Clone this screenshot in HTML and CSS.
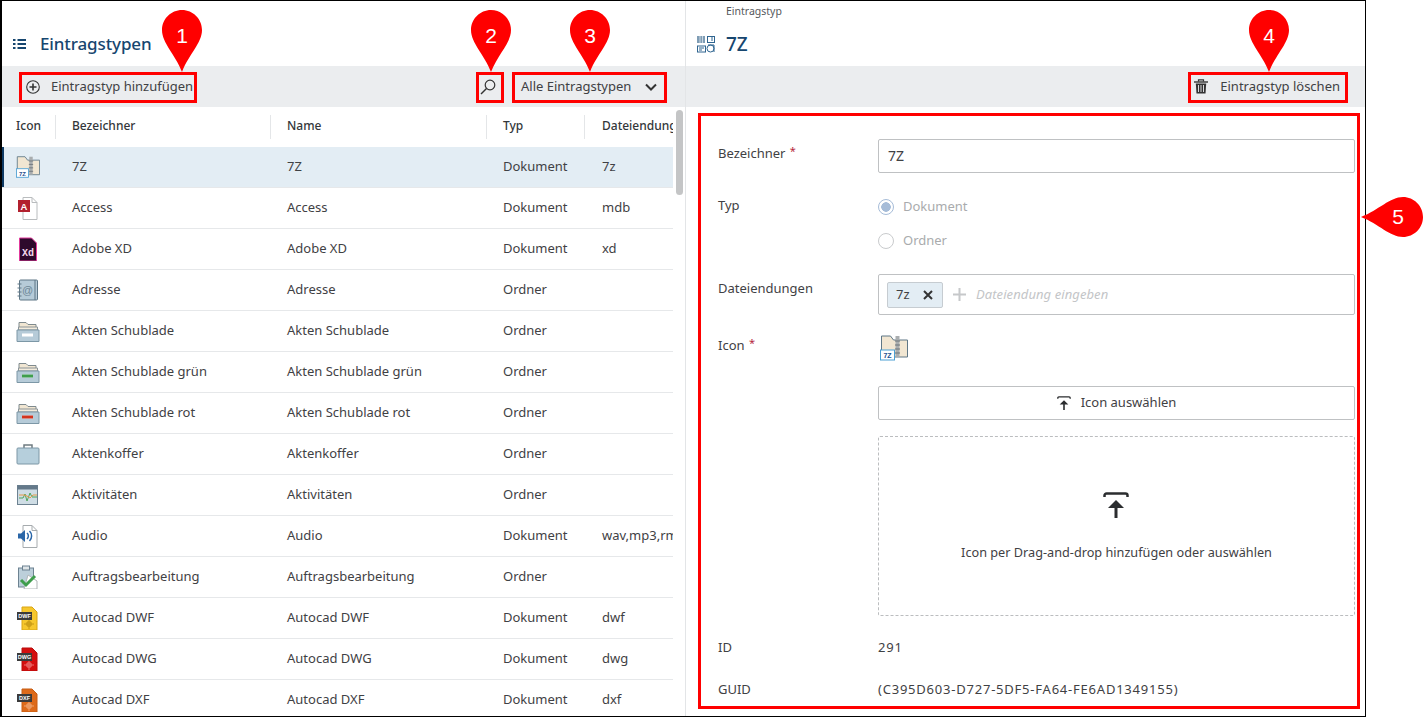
FILE: index.html
```html
<!DOCTYPE html>
<html lang="de">
<head>
<meta charset="utf-8">
<title>Eintragstypen</title>
<link rel="stylesheet" href="styles.css">
</head>
<body>
<svg class="defs" width="0" height="0" aria-hidden="true">
  <defs>
    <symbol id="i-zip" viewBox="0 0 28 26">
      <path d="M1.500 1h9l3 4h14v17h-26z" fill="#f1e6d2" stroke="#5f7786"/>
      <rect x="15.500" y="1" width="4" height="21" fill="#a9adaf"/>
      <path d="M15 6h5M15 10h5M15 14h5M15 18h5" stroke="#6d7478"/>
      <rect x="0.500" y="15" width="14" height="10" fill="#fff" stroke="#4c9fd3"/>
      <text x="7.500" y="23" font-size="7" font-weight="700" fill="#1f4f8f" text-anchor="middle" font-family="Liberation Sans">7Z</text>
    </symbol>
    <symbol id="i-access" viewBox="0 0 24 24">
      <path d="M7 1.500h9l5 5v17h-14z" fill="#fff" stroke="#b9bcbe"/>
      <path d="M16 1.500v5h5" fill="none" stroke="#b9bcbe"/>
      <rect x="2" y="4" width="12" height="12" fill="#b2202e"/>
      <text x="8" y="13.500" font-size="9.500" font-weight="700" fill="#fff" text-anchor="middle" font-family="Liberation Sans">A</text>
    </symbol>
    <symbol id="i-xd" viewBox="0 0 24 24">
      <path d="M3.500 1h12l5 5v18h-17z" fill="#2e0a2c" stroke="#e0399b"/>
      <text x="12" y="19" font-size="10" font-weight="700" fill="#f4d7ec" text-anchor="middle" font-family="Liberation Mono">Xd</text>
    </symbol>
    <symbol id="i-addr" viewBox="0 0 24 24">
      <rect x="3.500" y="2" width="18" height="20" rx="1" fill="#b6cbd8" stroke="#5f7786"/>
      <path d="M19 2v20" stroke="#5f7786"/>
      <path d="M1.500 6h4M1.500 10h4M1.500 14h4M1.500 18h4" stroke="#5f7786"/>
      <text x="11.500" y="16" font-size="11" fill="#6d8797" text-anchor="middle" font-family="Liberation Sans">@</text>
    </symbol>
    <symbol id="i-drawer" viewBox="0 0 24 24">
      <path d="M3 10V3.500h7l2 2h8V10z" fill="#f1e6d2" stroke="#7f8a8e"/>
      <path d="M2.500 8h19v3h-19z" fill="#f4ecdc" stroke="#8b9498"/>
      <path d="M1 11h22v11.500H1z" fill="#b6cbd8" stroke="#7c97a6"/>
      <rect x="6" y="14.500" width="11" height="3" fill="#fff"/>
    </symbol>
    <symbol id="i-drawer-g" viewBox="0 0 24 24">
      <use href="#i-drawer"/>
      <rect x="6" y="14.500" width="11" height="3" fill="#3f9e4d"/>
    </symbol>
    <symbol id="i-drawer-r" viewBox="0 0 24 24">
      <use href="#i-drawer"/>
      <rect x="6" y="14.500" width="11" height="3" fill="#d2351f"/>
    </symbol>
    <symbol id="i-case" viewBox="0 0 24 24">
      <path d="M8 6V3h8v3" fill="none" stroke="#6f7b80" stroke-width="1.500"/>
      <rect x="1" y="6" width="22" height="16" rx="1" fill="#b6cfdc" stroke="#7c97a6"/>
    </symbol>
    <symbol id="i-act" viewBox="0 0 24 24">
      <rect x="1.500" y="2.500" width="20" height="19" fill="#cfdde5" stroke="#6d8291"/>
      <rect x="1.500" y="2.500" width="20" height="4" fill="#64798a"/>
      <path d="M3 15h4l2-4 2 7 3-8 2 4h5" fill="none" stroke="#4fa45b"/>
      <path d="M3 12h5l3 1 3 2 3-3h4" fill="none" stroke="#e39a4a"/>
    </symbol>
    <symbol id="i-audio" viewBox="0 0 24 24">
      <path d="M7 1.500h9l5 5v17h-14z" fill="#fff" stroke="#a6abae"/>
      <path d="M16 1.500v5h5" fill="none" stroke="#a6abae"/>
      <path d="M2 9.500h3l4-3.500v12l-4-3.500h-3z" fill="#2a66a8"/>
      <path d="M11 9a4 4 0 0 1 0 6M13.500 7a7 7 0 0 1 0 10" fill="none" stroke="#2a66a8" stroke-width="1.500"/>
    </symbol>
    <symbol id="i-task" viewBox="0 0 24 24">
      <rect x="2.500" y="3" width="15" height="19" fill="#bccfda" stroke="#6d8291"/>
      <rect x="6.500" y="1" width="7" height="4" fill="#dfe5e8" stroke="#6d8291"/>
      <path d="M12 10l9 6v8H8z" fill="#fff" stroke="#b0b5b7"/>
      <path d="M5 15l5 5 9-9" fill="none" stroke="#3f9e4d" stroke-width="3"/>
    </symbol>
    <symbol id="i-dwf" viewBox="0 0 24 24">
      <path d="M6 1h10l5 5v18H6z" fill="#f6c72d" stroke="#d9a514"/>
      <rect x="1" y="6" width="15" height="8" fill="#3b3b3b"/>
      <text x="8.500" y="12.300" font-size="5.500" font-weight="700" fill="#fff" text-anchor="middle" font-family="Liberation Sans">DWF</text>
      <path d="M13 14v9M8 18h10M11 16h4v4h-4z" fill="none" stroke="#b78a10" stroke-width=".8"/>
    </symbol>
    <symbol id="i-dwg" viewBox="0 0 24 24">
      <path d="M6 1h10l5 5v18H6z" fill="#d40f0f" stroke="#b90d0d"/>
      <rect x="1" y="6" width="15" height="8" fill="#3b3b3b"/>
      <text x="8.500" y="12.300" font-size="5.500" font-weight="700" fill="#fff" text-anchor="middle" font-family="Liberation Sans">DWG</text>
      <path d="M13 14v9M8 18h10M11 16h4v4h-4z" fill="none" stroke="#f08a8a" stroke-width=".8"/>
    </symbol>
    <symbol id="i-dxf" viewBox="0 0 24 24">
      <path d="M6 1h10l5 5v18H6z" fill="#dd6a1a" stroke="#c75c12"/>
      <rect x="1" y="6" width="15" height="8" fill="#3b3b3b"/>
      <text x="8.500" y="12.300" font-size="5.500" font-weight="700" fill="#fff" text-anchor="middle" font-family="Liberation Sans">DXF</text>
      <path d="M13 14v9M8 18h10M11 16h4v4h-4z" fill="none" stroke="#f4b58a" stroke-width=".8"/>
    </symbol>
    <symbol id="i-upload" viewBox="0 0 26 26">
      <path d="M1.500 5V3.500a2 2 0 0 1 2-2h19a2 2 0 0 1 2 2V5" fill="none" stroke="currentColor" stroke-width="2.500"/>
      <path d="M13 26V11" stroke="currentColor" stroke-width="3"/>
      <path d="M5 16l8-8 8 8z" fill="currentColor"/>
    </symbol>
    <symbol id="i-pin" viewBox="0 0 40 62">
      <path d="M20 0C31 0 40 9 40 20C40 33 27 44 20 62C13 44 0 33 0 20C0 9 9 0 20 0Z" fill="#ff0000"/>
    </symbol>
    <symbol id="i-pin-h" viewBox="0 0 62 40">
      <path d="M62 20C62 31 53 40 42 40C29 40 18 27 0 20C18 13 29 0 42 0C53 0 62 9 62 20Z" fill="#ff0000"/>
    </symbol>
  </defs>
</svg>

<div class="app">
  <section class="pane pane-left">
    <header class="head head-left">
      <svg class="ico-list" viewBox="0 0 13 10" width="13" height="10"><path d="M0 1h2.500M0 5h2.500M0 9h2.500M4.500 1H13M4.500 5H13M4.500 9H13" fill="none" stroke="#17466f" stroke-width="2"/></svg>
      <h1 class="title">Eintragstypen</h1>
    </header>
    <div class="toolbar">
      <button class="tool tool-add">
        <svg viewBox="0 0 14 14" width="14" height="14"><circle cx="7" cy="7" r="6.300" fill="none" stroke="#333" stroke-width="1.100"/><path d="M3.500 7h7M7 3.500v7" stroke="#333" stroke-width="1.600"/></svg>
        <span class="lift">Eintragstyp hinzufügen</span>
      </button>
      <button class="tool tool-search" aria-label="Suchen">
        <svg viewBox="0 0 16 16" width="16" height="16"><circle cx="10" cy="6" r="4.800" fill="none" stroke="#333" stroke-width="1.200"/><path d="M6.500 9.500L1 15" stroke="#333" stroke-width="1.400"/></svg>
      </button>
      <button class="tool tool-select">
        <span class="lift">Alle Eintragstypen</span>
        <svg viewBox="0 0 12 8" width="12" height="8"><path d="M1 1.500l5 5 5-5" fill="none" stroke="#333" stroke-width="2"/></svg>
      </button>
    </div>
    <div class="table">
      <div class="tr th">
        <div class="c">Icon</div><div class="c">Bezeichner</div><div class="c">Name</div><div class="c">Typ</div><div class="c last">Dateiendung</div>
      </div>
      <div class="tr sel"><div class="c"><svg class="ri"><use href="#i-zip"/></svg></div><div class="c">7Z</div><div class="c">7Z</div><div class="c">Dokument</div><div class="c last">7z</div></div>
      <div class="tr"><div class="c"><svg class="ri"><use href="#i-access"/></svg></div><div class="c">Access</div><div class="c">Access</div><div class="c">Dokument</div><div class="c last">mdb</div></div>
      <div class="tr"><div class="c"><svg class="ri"><use href="#i-xd"/></svg></div><div class="c">Adobe XD</div><div class="c">Adobe XD</div><div class="c">Dokument</div><div class="c last">xd</div></div>
      <div class="tr"><div class="c"><svg class="ri"><use href="#i-addr"/></svg></div><div class="c">Adresse</div><div class="c">Adresse</div><div class="c">Ordner</div><div class="c last"></div></div>
      <div class="tr"><div class="c"><svg class="ri"><use href="#i-drawer"/></svg></div><div class="c">Akten Schublade</div><div class="c">Akten Schublade</div><div class="c">Ordner</div><div class="c last"></div></div>
      <div class="tr"><div class="c"><svg class="ri"><use href="#i-drawer-g"/></svg></div><div class="c">Akten Schublade grün</div><div class="c">Akten Schublade grün</div><div class="c">Ordner</div><div class="c last"></div></div>
      <div class="tr"><div class="c"><svg class="ri"><use href="#i-drawer-r"/></svg></div><div class="c">Akten Schublade rot</div><div class="c">Akten Schublade rot</div><div class="c">Ordner</div><div class="c last"></div></div>
      <div class="tr"><div class="c"><svg class="ri"><use href="#i-case"/></svg></div><div class="c">Aktenkoffer</div><div class="c">Aktenkoffer</div><div class="c">Ordner</div><div class="c last"></div></div>
      <div class="tr"><div class="c"><svg class="ri"><use href="#i-act"/></svg></div><div class="c">Aktivitäten</div><div class="c">Aktivitäten</div><div class="c">Ordner</div><div class="c last"></div></div>
      <div class="tr"><div class="c"><svg class="ri"><use href="#i-audio"/></svg></div><div class="c">Audio</div><div class="c">Audio</div><div class="c">Dokument</div><div class="c last">wav,mp3,rm</div></div>
      <div class="tr"><div class="c"><svg class="ri"><use href="#i-task"/></svg></div><div class="c">Auftragsbearbeitung</div><div class="c">Auftragsbearbeitung</div><div class="c">Ordner</div><div class="c last"></div></div>
      <div class="tr"><div class="c"><svg class="ri"><use href="#i-dwf"/></svg></div><div class="c">Autocad DWF</div><div class="c">Autocad DWF</div><div class="c">Dokument</div><div class="c last">dwf</div></div>
      <div class="tr"><div class="c"><svg class="ri"><use href="#i-dwg"/></svg></div><div class="c">Autocad DWG</div><div class="c">Autocad DWG</div><div class="c">Dokument</div><div class="c last">dwg</div></div>
      <div class="tr"><div class="c"><svg class="ri"><use href="#i-dxf"/></svg></div><div class="c">Autocad DXF</div><div class="c">Autocad DXF</div><div class="c">Dokument</div><div class="c last">dxf</div></div>
    </div>
    <div class="scrollbar"></div>
  </section>

  <section class="pane pane-right">
    <header class="head head-right">
      <div class="crumb">Eintragstyp</div>
      <div class="head-line">
        <svg class="ico-types" viewBox="0 0 18 17" width="18" height="17">
          <rect x="0" y="0" width="8" height="7" fill="#7f9db5"/>
          <path d="M3 0v7M5.500 0v7" stroke="#fff" stroke-width=".6"/>
          <rect x="10.500" y=".5" width="7" height="6" fill="none" stroke="#2f6590"/>
          <path d="M14 2h2M14 4h2" stroke="#2f6590"/>
          <rect x=".5" y="10" width="8" height="6" fill="none" stroke="#2f6590"/>
          <path d="M2 12h5M2 14h3" stroke="#2f6590"/>
          <circle cx="13.500" cy="12.500" r="3.500" fill="none" stroke="#2f6590"/>
          <path d="M11 9h6v7" fill="none" stroke="#2f6590"/>
        </svg>
        <h2 class="title title-7z">7Z</h2>
      </div>
    </header>
    <div class="toolbar toolbar-right">
      <button class="tool tool-del">
        <svg viewBox="0 0 14 15" width="14" height="15"><path d="M0 3h14" stroke="#333" stroke-width="1.400"/><path d="M4.500 2.500V.8h5v1.700" fill="none" stroke="#333" stroke-width="1.200"/><path d="M1.800 4.500h10.400l-.7 10h-9z" fill="#333"/><path d="M4.500 6v7M7 6v7M9.500 6v7" stroke="#eceef0" stroke-width=".9"/></svg>
        <span class="lift">Eintragstyp löschen</span>
      </button>
    </div>
    <form class="form">
      <label class="lb">Bezeichner <i>*</i></label>
      <div class="input"><span class="lift">7Z</span></div>

      <label class="lb lb-typ">Typ</label>
      <div class="radios">
        <div class="radio"><span class="dot on"></span><span class="lift">Dokument</span></div>
        <div class="radio"><span class="dot"></span><span class="lift">Ordner</span></div>
      </div>

      <label class="lb">Dateiendungen</label>
      <div class="tags">
        <span class="tag"><span class="lift">7z</span>
          <svg viewBox="0 0 10 10" width="10" height="10"><path d="M1 1l8 8M9 1l-8 8" stroke="#333" stroke-width="2"/></svg>
        </span>
        <svg class="plus" viewBox="0 0 13 13" width="13" height="13"><path d="M6.500 0v13M0 6.500h13" stroke="#c6c8ca" stroke-width="2"/></svg>
        <span class="ph lift">Dateiendung eingeben</span>
      </div>

      <label class="lb">Icon <i>*</i></label>
      <div class="iconrow"><svg class="bigicon"><use href="#i-zip"/></svg></div>

      <div class="sp"></div>
      <button type="button" class="btn"><svg class="up-s"><use href="#i-upload"/></svg><span class="lift">Icon auswählen</span></button>

      <div class="sp"></div>
      <div class="drop">
        <svg class="up-l"><use href="#i-upload"/></svg>
        <div>Icon per Drag-and-drop hinzufügen oder auswählen</div>
      </div>

      <label class="lb lb-v">ID</label>
      <div class="val val-id">291</div>
      <label class="lb lb-v2">GUID</label>
      <div class="val">(C395D603-D727-5DF5-FA64-FE6AD1349155)</div>
    </form>
  </section>

  <div class="box box-1"></div>
  <div class="box box-2"></div>
  <div class="box box-3"></div>
  <div class="box box-4"></div>
  <div class="box box-5"></div>
  <div class="pin pin-1"><svg class="pin-v"><use href="#i-pin"/></svg><span>1</span></div>
  <div class="pin pin-2"><svg class="pin-v"><use href="#i-pin"/></svg><span>2</span></div>
  <div class="pin pin-3"><svg class="pin-v"><use href="#i-pin"/></svg><span>3</span></div>
  <div class="pin pin-4"><svg class="pin-v"><use href="#i-pin"/></svg><span>4</span></div>
  <div class="pin pin-5"><svg class="pin-h"><use href="#i-pin-h"/></svg><span>5</span></div>
</div>
</body>
</html>
```
FILE: styles.css
```css
* { box-sizing: border-box; }
html, body { margin: 0; padding: 0; height: 718px; overflow: hidden; background: #fff; }
body { font-family: "Noto Sans", sans-serif; font-size: 13px; color: #3f4144; }
.defs { position: absolute; }
button { font: inherit; color: inherit; background: none; border: 0; padding: 0; display: flex; align-items: center; }
.lift { padding-bottom: 2px; display: block; }

.app {
  position: relative;
  width: 1366px;
  height: 717px;
  border: 1px solid #000;
  border-left-width: 2px;
  display: flex;
  overflow: visible;
}
.pane { display: flex; flex-direction: column; min-width: 0; height: 100%; overflow: hidden; position: relative; }
.pane-left { width: 684px; border-right: 1px solid #e3e5e7; flex: none; }
.pane-right { flex: 1; }

.head { height: 65px; flex: none; }
.head-left { display: flex; align-items: center; padding: 21px 0 0 11px; gap: 14px; }
.title { margin: 0; font-size: 17px; font-weight: 500; color: #17466f; line-height: 24px; letter-spacing: -.12px; }
.title-7z { font-size: 19px; }
.head-right { padding: 0 0 0 40px; position: relative; }
.crumb { font-size: 10.500px; line-height: 14px; padding-top: 3px; color: #55585b; }
.head-line { display: flex; align-items: center; gap: 11px; margin: 14px 0 0 -29px; }
.ico-list, .ico-types { flex: none; }

.toolbar { height: 41px; flex: none; background: #ebedef; display: flex; align-items: center; position: relative; }
.tool { height: 30px; flex: none; }
.tool-add { margin-left: 24px; gap: 11px; width: 172px; }
.tool-search { margin-left: 275px; width: 28px; justify-content: center; padding-left: 2px; }
.tool-select { margin-left: 8px; width: 155px; padding-left: 12px; justify-content: space-between; padding-right: 7px; }
.toolbar-right { justify-content: flex-end; padding-right: 25px; }
.tool-del { gap: 12px; }

.table { flex: 1; overflow: hidden; width: 671px; }
.tr {
  display: grid;
  grid-template-columns: 54px 215px 216px 98px 88px;
  height: 41px;
  align-items: center;
  border-bottom: 1px solid #e6e8ea;
}
.c { padding-left: 16px; padding-bottom: 2px; white-space: nowrap; overflow: hidden; }
.c:first-child { padding-left: 14px; }
.c.last { padding-right: 0; padding-left: 17px; }
.tr:not(.th) .c:first-child { padding-bottom: 0; }
.th { height: 40px; border-bottom: 0; font-weight: 500; color: #33373a; font-size: 12px; }
.th .c { height: 24px; line-height: 22px; border-right: 1px solid #e4e6e8; }
.th .c.last { border-right: 0; }
.sel { background: #e3edf4; box-shadow: inset 2px 0 0 #0f3a63; }
.ri { width: 24px; height: 24px; display: block; }
.scrollbar { position: absolute; left: 674px; top: 109px; width: 7px; height: 85px; background: #c4c5c6; border-radius: 4px; }

.form {
  display: grid;
  grid-template-columns: 160px 477px;
  grid-template-rows: 34px 69px 41px 39px 34px 180px 30px 22px;
  row-gap: 16px;
  padding: 32px 0 0 32px;
}
.lb { padding-top: 4px; line-height: 20px; }
.lb i { color: #b5283c; font-style: normal; font-size: 11px; line-height: 0; vertical-align: 3px; margin-left: 1px; }
.lb-typ { padding-top: 6px; }
.lb-v { padding-top: 5px; }
.lb-v2 { padding-top: 1px; }
.input { border: 1px solid #bfc1c3; border-radius: 2px; display: flex; align-items: center; padding-left: 9px; font-size: 14px; }
.radios { display: flex; flex-direction: column; padding-top: 1px; }
.radio { height: 34px; display: flex; align-items: center; gap: 9px; color: #a9abad; }
.dot { width: 16px; height: 16px; border-radius: 50%; border: 1px solid #c9cbcd; flex: none; display: block; }
.dot.on { border-color: #a6bcd8; background: radial-gradient(circle, #a6bcd8 0 4.500px, #fff 5px); }
.tags { border: 1px solid #bfc1c3; border-radius: 2px; display: flex; align-items: center; padding-left: 8px; }
.tag { width: 56px; height: 26px; background: #e3edf4; border: 1px solid #c6ccd1; border-radius: 2px; display: flex; align-items: center; justify-content: space-between; padding: 0 9px 0 8px; }
.plus { margin-left: 10px; }
.ph { font-style: italic; color: #c3c5c7; font-size: 13px; margin-left: 10px; letter-spacing: .08px; }
.iconrow { padding: 4px 0 0 2px; }
.bigicon { width: 28px; height: 26px; display: block; }
.btn { border: 1px solid #bfc1c3; border-radius: 2px; justify-content: center; gap: 10px; background: #fff; }
.up-s { width: 14px; height: 14px; color: #2b2d2f; }
.up-l { width: 26px; height: 28px; color: #2b2d2f; margin-right: 1px; }
.drop { border: 1px dashed #bbbdbf; border-radius: 2px; display: flex; flex-direction: column; align-items: center; justify-content: center; gap: 24px; font-size: 12.700px; }
.val { display: flex; align-items: center; letter-spacing: .78px; }
.val-id { height: 30px; }

.box { position: absolute; border: 3px solid #ff0000; pointer-events: none; }
.box-1 { left: 17px; top: 71px; width: 178px; height: 31px; }
.box-2 { left: 474px; top: 71px; width: 28px; height: 31px; }
.box-3 { left: 510px; top: 71px; width: 155px; height: 31px; }
.box-4 { left: 1186px; top: 71px; width: 160px; height: 31px; }
.box-5 { left: 696px; top: 112px; width: 662px; height: 596px; }

.pin { position: absolute; font-family: "Liberation Sans", sans-serif; font-size: 21px; color: #fff; }
.pin span { position: absolute; display: flex; align-items: center; justify-content: center; }
.pin-v { width: 40px; height: 62px; display: block; }
.pin-h { width: 62px; height: 40px; display: block; }
.pin-1, .pin-2, .pin-3, .pin-4 { top: 9px; width: 40px; height: 62px; }
.pin-1 span, .pin-2 span, .pin-3 span, .pin-4 span { left: 0; top: 12px; width: 40px; height: 28px; }
.pin-1 { left: 160px; }
.pin-2 { left: 469px; }
.pin-3 { left: 568px; }
.pin-4 { left: 1247px; }
.pin-5 { left: 1359px; top: 196px; width: 62px; height: 40px; }
.pin-5 span { left: 28px; top: 6px; width: 18px; height: 28px; }
```
